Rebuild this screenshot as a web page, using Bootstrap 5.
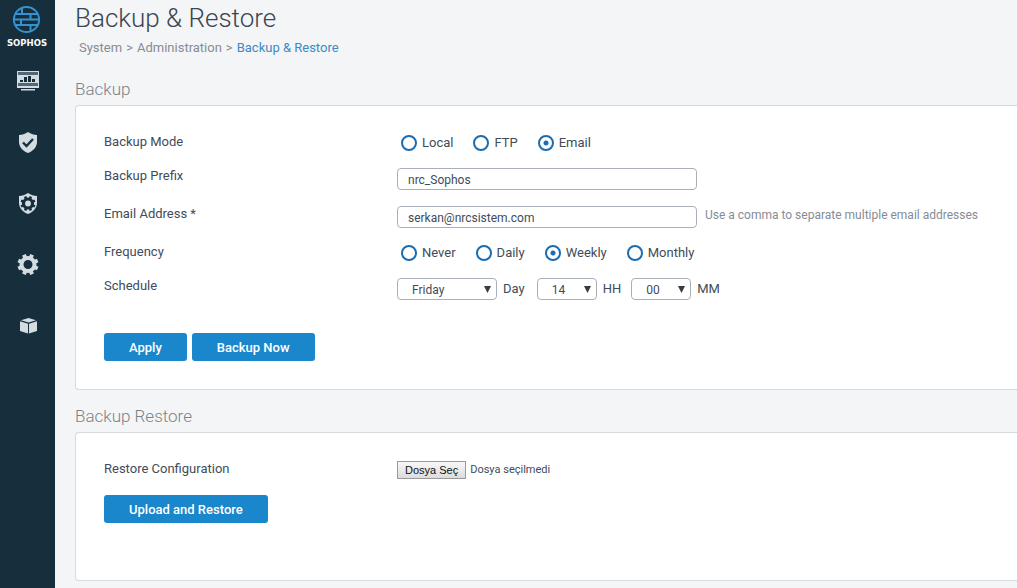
<!DOCTYPE html>
<html lang="en">
<head>
<meta charset="utf-8">
<meta name="viewport" content="width=device-width, initial-scale=1">
<title>Backup &amp; Restore</title>
<link href="https://cdn.jsdelivr.net/npm/bootstrap@5.3.0/dist/css/bootstrap.min.css" rel="stylesheet">
<style>
  :root { --ink: #414c5a; --muted: #868c95; --brand: #1a87cc; --ring: #1a6db0; --field: #aab0b8; }
  body { font-family: Roboto, "Liberation Sans", sans-serif; font-size: 13px; line-height: 20px; color: var(--ink); background: #f4f5f7; }
  main { min-width: 0; padding-left: 20px; }
  .side { width: 55px; background: #172f3c; }
  .side a { display: block; height: 24px; line-height: 0; color: #d3dce1; }
  .side .logo { height: 48px; color: #fff; }
  .side .nav-icons { gap: 37px; margin-top: 21px; }
  .page-title { font-size: 26px; font-weight: 300; line-height: 37px; color: #3b4653; }
  .crumbs { font-size: 13px; color: var(--muted); padding-left: 4px; margin-top: 1px; }
  .crumbs .breadcrumb-item + .breadcrumb-item { padding-left: 4px; }
  .crumbs .breadcrumb-item + .breadcrumb-item::before { padding-right: 4px; color: var(--muted); content: ">"; }
  .crumbs a { color: var(--muted); text-decoration: none; }
  .crumbs .here { color: #3d8ac4; }
  .section-title { margin: 14px 0 4px; font-size: 17px; font-weight: 300; line-height: 24px; color: #7c828b; }
  .section-title.first { margin-top: 19px; }
  .panel { background: #fff; border: 1px solid #d6d9dd; border-right: 0; border-radius: 4px 0 0 4px; padding: 25px 28px 28px; }
  .restore { padding-bottom: 57px; }
  .line { display: flex; min-height: 38px; }
  .line.short { min-height: 34px; }
  .line.tall { min-height: 58px; }
  .restore .line { min-height: 37px; }
  .line > .name { flex: 0 0 293px; line-height: 22px; }
  .line > .value { display: flex; align-items: center; height: 22px; margin-top: 3px; }
  .restore .line > .value { margin-top: 1px; }
  .line > .choices { margin-top: 1px; padding-left: 4px; gap: 20px; }
  .choice { display: flex; align-items: center; gap: 5px; line-height: 22px; }
  .choice .form-check-input { width: 16px; height: 16px; margin: 0; border: 2px solid var(--ring); background: #fff; }
  .choice .form-check-input:checked { background: radial-gradient(circle, var(--ring) 2px, #fff 3px); }
  .form-control.field, .form-select.field { height: 22px; padding: 2px 10px 0; font-size: 12px; line-height: 18px; color: var(--ink); border: 1px solid var(--field); border-radius: 4px; }
  .form-control.field { width: 300px; }
  .form-select.field { width: 60px; padding: 1px 14px 0; background: #fff url("data:image/svg+xml,%3Csvg xmlns='http://www.w3.org/2000/svg' viewBox='0 0 7 7'%3E%3Cpath fill='%23333d48' d='M0 0h7L3.500 7z'/%3E%3C/svg%3E") no-repeat right 5px center / 7px 7px; }
  .form-select.day { width: 100px; }
  .unit { margin: 0 12px 0 6px; line-height: 22px; }
  .unit.hh { margin-right: 10px; }
  .hint { font-size: 12px; color: var(--muted); margin-left: 8px; padding-bottom: 4px; }
  .actions { gap: 5px; }
  .btn.act { background: var(--brand); color: #fff; font-size: 13px; font-weight: 500; line-height: 20px; padding: 5px 25px 3px; border: 0; border-radius: 3px; }
  .btn.act:hover { background: #1477b6; }
  .pick { font: 11px/16px "Liberation Sans", sans-serif; color: #111; padding: 0 7px; border: 1px solid #9a9a9a; background: linear-gradient(#f8f8f8, #dcdcdc); }
  .picked { font-size: 11px; margin-left: 4px; }
</style>
</head>
<body>
<div class="d-flex min-vh-100">
  <aside class="side flex-shrink-0">
    <a class="logo" href="#" aria-label="Sophos">
      <svg width="55" height="48" viewBox="0 0 55 48">
        <g fill="none" stroke="#3591cf" stroke-width="2">
          <circle cx="26.500" cy="19.500" r="12.600"/>
          <path d="M16 14h21M14 19.500h25M16 25h21M22 8v6M30.500 14v5.500M21 19.500V25M30.500 25v6"/>
        </g>
        <text x="27" y="45.500" text-anchor="middle" font-family="DejaVu Sans, sans-serif" font-size="8.500" font-weight="700" fill="#fff">SOPHOS</text>
      </svg>
    </a>
    <nav class="nav-icons d-flex flex-column" aria-label="Main">
      <a href="#" aria-label="Monitor">
        <svg width="55" height="24" viewBox="0 0 55 24">
          <path fill="currentColor" d="M17 2h22v17H17z"/>
          <path fill="#536671" d="M18 3h20v3H18zM18 14h20v3H18z"/>
          <path fill="#172f3c" d="M20 11h3v2h-3zM24 8h3v5h-3zM28 7h3v6h-3zM32 10h3v3h-3z"/>
          <path fill="currentColor" d="M21 20h14v1.500H21z"/>
        </svg>
      </a>
      <a href="#" aria-label="Protect">
        <svg width="55" height="24" viewBox="0 0 55 24">
          <path fill="currentColor" d="M28 2c3 2 6 3 9 3v7c0 5-4 9-9 11-5-2-9-6-9-11V5c3 0 6-1 9-3z"/>
          <path fill="none" stroke="#172f3c" stroke-width="2.400" d="m23 12.500 3.500 3.500 6.500-7"/>
        </svg>
      </a>
      <a href="#" aria-label="Configure">
        <svg width="55" height="24" viewBox="0 0 55 24">
          <path fill="currentColor" d="M28 2c3 2 6 3 9 3v7c0 5-4 9-9 11-5-2-9-6-9-11V5c3 0 6-1 9-3z"/>
          <g transform="translate(28 12.500)" stroke="#172f3c" fill="none"><circle r="4.500" stroke-width="3.200"/>
          <path transform="rotate(22.500)" stroke-width="2.600" d="M0-7.500V-5M0 5v2.500M-7.500 0H-5M5 0h2.500M-5.300-5.300-3.500-3.500M3.500 3.500l1.800 1.800M-5.300 5.300-3.500 3.500M3.500-3.500l1.800-1.800"/></g>
        </svg>
      </a>
      <a href="#" aria-label="System">
        <svg width="55" height="24" viewBox="0 0 55 24">
          <g transform="translate(28 12.500)" fill="none" stroke="currentColor"><circle r="6.500" stroke-width="4"/>
          <path transform="rotate(22.500)" stroke-width="4" d="M0-10.500V-7M0 7v3.500M-10.500 0H-7M7 0h3.500M-7.420-7.420-5-5M5 5l2.420 2.420M-7.420 7.420-5 5M5-5l2.420-2.420"/></g>
        </svg>
      </a>
      <a href="#" aria-label="Packages">
        <svg width="55" height="24" viewBox="0 0 55 24">
          <path fill="currentColor" d="M28.500 5 36 7.200 28.500 9.500 21 7.200zM20 8.200l8 2.500V20.500l-8-2.500zM37 8.200l-8 2.500v9.800l8-2.500z"/>
        </svg>
      </a>
    </nav>
  </aside>

  <main class="flex-grow-1">
    <h1 class="page-title mb-0">Backup &amp; Restore</h1>
    <nav aria-label="Breadcrumb">
      <ol class="breadcrumb crumbs mb-0">
        <li class="breadcrumb-item"><a href="#">System</a></li>
        <li class="breadcrumb-item"><a href="#">Administration</a></li>
        <li class="breadcrumb-item"><a class="here" href="#" aria-current="page">Backup &amp; Restore</a></li>
      </ol>
    </nav>

    <h2 class="section-title first">Backup</h2>
    <form class="panel">
      <div class="line short" role="radiogroup" aria-labelledby="mode">
        <span class="name" id="mode">Backup Mode</span>
        <div class="value choices">
          <label class="choice"><input class="form-check-input" type="radio" name="mode">Local</label>
          <label class="choice"><input class="form-check-input" type="radio" name="mode">FTP</label>
          <label class="choice"><input class="form-check-input" type="radio" name="mode" checked>Email</label>
        </div>
      </div>
      <div class="line">
        <label class="name" for="prefix">Backup Prefix</label>
        <div class="value"><input class="form-control field" id="prefix" type="text" value="nrc_Sophos"></div>
      </div>
      <div class="line">
        <label class="name" for="email">Email Address *</label>
        <div class="value"><input class="form-control field" id="email" type="text" value="serkan@nrcsistem.com"><span class="hint">Use a comma to separate multiple email addresses</span></div>
      </div>
      <div class="line short" role="radiogroup" aria-labelledby="freq">
        <span class="name" id="freq">Frequency</span>
        <div class="value choices">
          <label class="choice"><input class="form-check-input" type="radio" name="freq">Never</label>
          <label class="choice"><input class="form-check-input" type="radio" name="freq">Daily</label>
          <label class="choice"><input class="form-check-input" type="radio" name="freq" checked>Weekly</label>
          <label class="choice"><input class="form-check-input" type="radio" name="freq">Monthly</label>
        </div>
      </div>
      <div class="line tall">
        <span class="name">Schedule</span>
        <div class="value">
          <select class="form-select field day" id="day"><option>Friday</option></select><label class="unit" for="day">Day</label>
          <select class="form-select field" id="hour"><option>14</option></select><label class="unit hh" for="hour">HH</label>
          <select class="form-select field" id="minute"><option>00</option></select><label class="unit" for="minute">MM</label>
        </div>
      </div>
      <div class="d-flex actions">
        <button class="btn act" type="button">Apply</button>
        <button class="btn act" type="button">Backup Now</button>
      </div>
    </form>

    <h2 class="section-title">Backup Restore</h2>
    <form class="panel restore">
      <div class="line">
        <span class="name">Restore Configuration</span>
        <div class="value">
          <input class="visually-hidden" type="file" id="file">
          <label class="pick" for="file">Dosya Seç</label><span class="picked">Dosya seçilmedi</span>
        </div>
      </div>
      <button class="btn act" type="button">Upload and Restore</button>
    </form>
  </main>
</div>
<script src="https://cdn.jsdelivr.net/npm/bootstrap@5.3.0/dist/js/bootstrap.bundle.min.js"></script>
</body>
</html>
